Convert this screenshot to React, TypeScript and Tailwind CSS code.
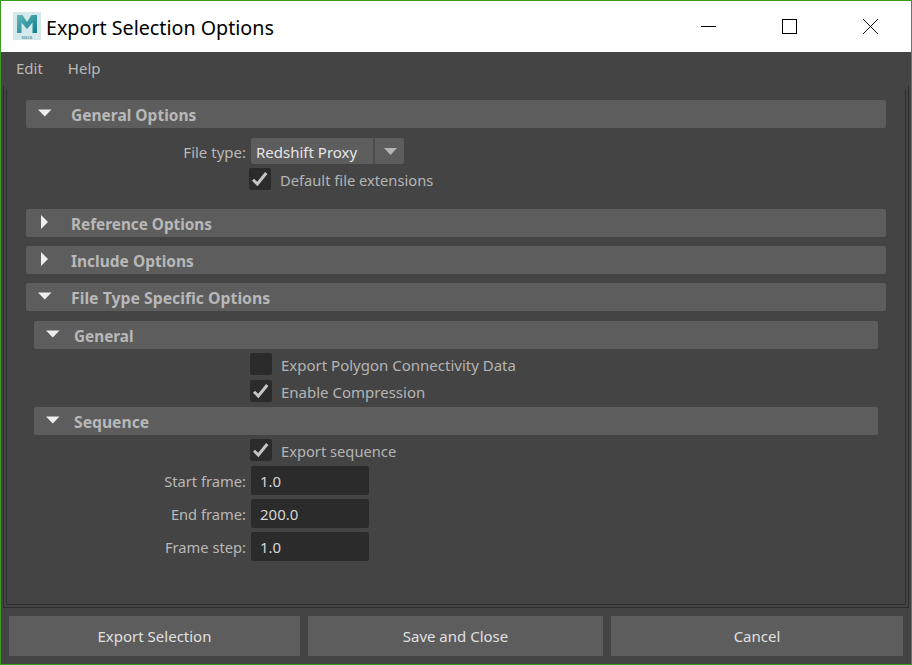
import React from "react";

const font = { fontFamily: '"Noto Sans", "Open Sans", sans-serif' };

function Tri({ open }: { open: boolean }) {
  return open ? (
    <svg width="14" height="14" viewBox="0 0 14 14" className="-mt-px shrink-0">
      <path d="M0 2.5H13.5L6.75 9.5Z" fill="#eeeeee" />
    </svg>
  ) : (
    <svg width="14" height="14" viewBox="0 0 14 14" className="-mt-[3px] shrink-0">
      <path d="M3 0V14L10 7Z" fill="#eeeeee" />
    </svg>
  );
}

function Header({ title, open, sub, size = "text-[15.5px]" }: { title: string; open: boolean; sub?: boolean; size?: string }) {
  return (
    <div className={"flex h-7 items-center rounded-[2px] bg-[#5d5d5d] pl-3 " + (sub ? "mx-2" : "")}>
      <Tri open={open} />
      <span className={"pt-[4px] font-bold leading-none text-[#b8b8b8] " + size + " " + (sub ? "ml-[14px]" : "ml-[19px]")}>{title}</span>
    </div>
  );
}

function Check({ checked }: { checked: boolean }) {
  return (
    <div className="flex h-[22px] w-[22px] shrink-0 items-center justify-center rounded-[2px] bg-[#2b2b2b]">
      {checked && (
        <svg width="16" height="16" viewBox="0 0 16 16">
          <path d="M1 8.7L5.3 13L14.3 2" fill="none" stroke="#c6c6c6" strokeWidth="3" />
        </svg>
      )}
    </div>
  );
}

function CheckRow({ label, checked, sub, size = "text-[14.7px]", className = "" }: { label: string; checked: boolean; sub?: boolean; size?: string; className?: string }) {
  return (
    <div className={"flex h-[22px] items-center " + (sub ? "pl-[224px] " : "pl-[223px] ") + className}>
      <Check checked={checked} />
      <span className={"ml-[9px] whitespace-nowrap pt-[2px] text-[#b4b4b4] " + size}>{label}</span>
    </div>
  );
}

function Field({ label, value }: { label: string; value: string }) {
  return (
    <div className="flex h-[29px] items-center">
      <span className="w-[220px] pt-[2px] text-right text-[14.7px] text-[#b8b8b8]">{label}</span>
      <div className="ml-[5px] flex h-[29px] w-[118px] items-center rounded-[2px] bg-[#2b2b2b] pl-[9px] pt-[2px] text-[15px] text-[#d4d4d4]">{value}</div>
    </div>
  );
}

function Btn({ label, className }: { label: string; className: string }) {
  return (
    <div className={"flex h-10 items-center justify-center bg-[#5d5d5d] pt-[1px] text-[15px] text-[#e0e0e0] " + className}>{label}</div>
  );
}

export default function App() {
  return (
    <div className="flex h-[665px] w-[912px] flex-col overflow-hidden border border-[#3c9a1c] bg-[#444444]" style={font}>
      <div className="flex h-[51px] shrink-0 items-center bg-white pl-3">
        <svg width="28" height="28" viewBox="0 0 28 28" className="-mt-[1px]">
          <defs>
            <linearGradient id="mg" x1="0" y1="0" x2="1" y2="1">
              <stop offset="0" stopColor="#62b6bd" />
              <stop offset="1" stopColor="#0f7f8c" />
            </linearGradient>
          </defs>
          <rect width="28" height="28" fill="#d6e8e9" />
          <path d="M4 21V3H9.5L14 10L18.5 3H24V21H19.5V10.5L14 17L8.5 10.5V21Z" fill="url(#mg)" />
          <text x="14" y="26.5" textAnchor="middle" fontSize="4" fontWeight="700" fill="#6aa5ab" fontFamily="Liberation Sans">MAYA</text>
        </svg>
        <span className="ml-[5px] pt-[2px] text-[19.7px] leading-none text-black">Export Selection Options</span>
        <div className="ml-auto flex items-center pr-[33px]">
          <div className="h-px w-[15px] bg-black" />
          <div className="ml-[66px] h-[15px] w-[15px] border border-black" />
          <svg width="15" height="15" viewBox="0 0 15 15" className="ml-[66px]">
            <path d="M0 0L15 15M15 0L0 15" stroke="#111" strokeWidth="1" />
          </svg>
        </div>
      </div>

      <div className="flex h-[34px] shrink-0 items-center pb-[1px] pl-[15px] text-[15px] text-[#b8b8b8]">
        <span>Edit</span>
        <span className="ml-[25px]">Help</span>
      </div>

      <div className="mx-[2px] h-[522px] shrink-0 border border-t-0 border-[#2e2e2e] pt-[3px] pr-[2px] pb-[2px] pl-[2px]">
        <div className="h-full border border-t-0 border-[#2e2e2e] px-[19px] pt-[11px]">
          <Header title="General Options" open />
          <div className="mt-[10px] flex h-[26px] items-center">
            <span className="w-[220px] pt-[2px] text-right text-[15px] text-[#b8b8b8]">File type:</span>
            <div className="ml-[5px] flex h-[26px] w-[153px] items-center rounded-[2px] bg-[#5d5d5d] text-[15px] text-[#e6e6e6]">
              <span className="w-[122px] pl-[5px] pt-[2px]">Redshift Proxy</span>
              <div className="h-full w-[2px] bg-[#4c4c4c]" />
              <svg width="13" height="7" viewBox="0 0 13 7" className="ml-[9px]">
                <path d="M0 0H13L6.5 7Z" fill="#b4b4b4" />
              </svg>
            </div>
          </div>
          <CheckRow label="Default file extensions" checked className="mt-[4px]" />
          <div className="mt-[19px]"><Header title="Reference Options" open={false} size="text-[15.3px]" /></div>
          <div className="mt-[9px]"><Header title="Include Options" open={false} /></div>
          <div className="mt-[9px]"><Header title="File Type Specific Options" open size="text-[15.8px]" /></div>
          <div className="mt-[10px]"><Header title="General" open sub size="text-[15.3px]" /></div>
          <CheckRow label="Export Polygon Connectivity Data" checked={false} sub size="text-[15px]" className="mt-[4px]" />
          <CheckRow label="Enable Compression" checked sub size="text-[15px]" className="mt-[5px]" />
          <div className="mt-[5px]"><Header title="Sequence" open sub size="text-[15.7px]" /></div>
          <CheckRow label="Export sequence" checked sub size="text-[14.7px]" className="mt-[4px]" />
          <div className="mt-[5px] flex flex-col gap-1">
            <Field label="Start frame:" value="1.0" />
            <Field label="End frame:" value="200.0" />
            <Field label="Frame step:" value="1.0" />
          </div>
        </div>
      </div>

      <div className="mt-[8px] flex gap-2 pl-2">
        <Btn label="Export Selection" className="w-[291px]" />
        <Btn label="Save and Close" className="w-[295px]" />
        <Btn label="Cancel" className="w-[292px]" />
      </div>
    </div>
  );
}
